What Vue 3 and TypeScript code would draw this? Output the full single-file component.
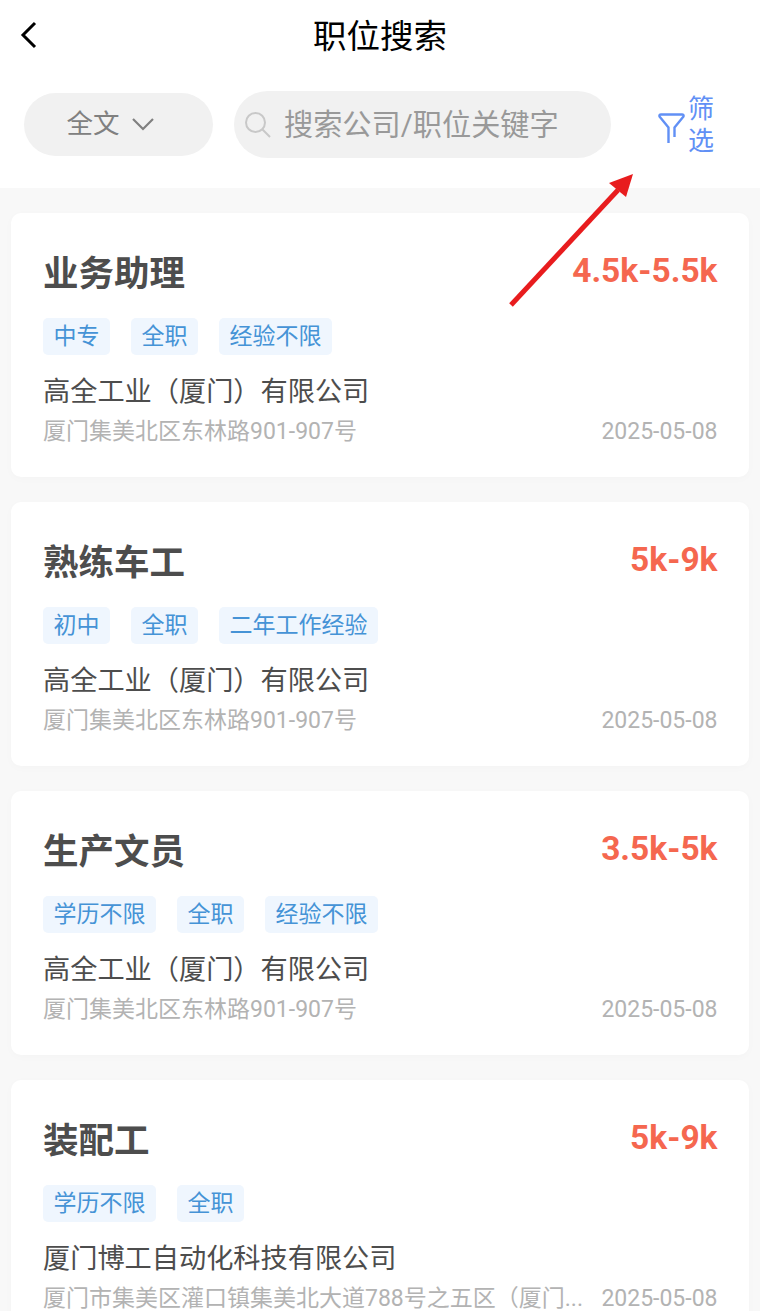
<script setup lang="ts">
interface Job { title: string; salary: string; tags: string[]; company: string; address: string; date: string }
const jobs: Job[] = [
  { title: '业务助理', salary: '4.5k-5.5k', tags: ['中专', '全职', '经验不限'], company: '高全工业（厦门）有限公司', address: '厦门集美北区东林路901-907号', date: '2025-05-08' },
  { title: '熟练车工', salary: '5k-9k', tags: ['初中', '全职', '二年工作经验'], company: '高全工业（厦门）有限公司', address: '厦门集美北区东林路901-907号', date: '2025-05-08' },
  { title: '生产文员', salary: '3.5k-5k', tags: ['学历不限', '全职', '经验不限'], company: '高全工业（厦门）有限公司', address: '厦门集美北区东林路901-907号', date: '2025-05-08' },
  { title: '装配工', salary: '5k-9k', tags: ['学历不限', '全职'], company: '厦门博工自动化科技有限公司', address: '厦门市集美区灌口镇集美北大道788号之五区（厦门...', date: '2025-05-08' },
]
</script>

<template>
  <div class="page">
    <header class="top">
      <div class="nav">
        <svg class="back" width="18" height="28" viewBox="0 0 18 28"><path d="M15 2 L3 14 L15 26" fill="none" stroke="#000" stroke-width="3"/></svg>
        <h1 class="nav-title">职位搜索</h1>
      </div>
      <div class="search-row">
        <div class="scope">
          <span class="scope-text">全文</span>
          <svg class="chevron" width="24" height="14" viewBox="0 0 24 14"><path d="M2 2 L12 12 L22 2" fill="none" stroke="#808080" stroke-width="2.2"/></svg>
        </div>
        <div class="search">
          <svg width="28" height="28" viewBox="0 0 28 28"><circle cx="11.500" cy="11.500" r="9.500" fill="none" stroke="#c8c8c8" stroke-width="2"/><path d="M18.500 18.500 L26 26" fill="none" stroke="#c8c8c8" stroke-width="2"/></svg>
          <span class="search-text">搜索公司/职位关键字</span>
        </div>
        <div class="filter">
          <svg width="29" height="32" viewBox="0 0 29 32"><path d="M11.500 31 V15.500 L2.500 4.500 Q2 2.500 4 2.500 H25 Q27 2.500 26.500 4.500 L17.500 15.500 V25" fill="none" stroke="#6190f5" stroke-width="2.400" stroke-linejoin="round"/></svg>
          <span class="filter-text">筛<br>选</span>
        </div>
      </div>
    </header>
    <main class="list">
      <article v-for="job in jobs" :key="job.title" class="card">
        <div class="head">
          <h2 class="title">{{ job.title }}</h2>
          <span class="salary">{{ job.salary }}</span>
        </div>
        <div class="tags">
          <span v-for="tag in job.tags" :key="tag" class="tag">{{ tag }}</span>
        </div>
        <div class="company">{{ job.company }}</div>
        <div class="foot">
          <span class="address">{{ job.address }}</span>
          <span class="date">{{ job.date }}</span>
        </div>
      </article>
    </main>
    <svg class="arrow" width="130" height="140" viewBox="0 0 130 140"><path d="M4 135 L111 20" fill="none" stroke="#e81c1e" stroke-width="5"/><path d="M126 4 L119 27 L102 13 Z" fill="#e81c1e"/></svg>
  </div>
</template>

<style>
html, body { margin: 0; background: #f8f8f8; }
</style>

<style scoped>
.page {
  position: relative;
  width: 760px;
  height: 1311px;
  overflow: hidden;
  background: #f8f8f8;
  font-family: Roboto, "Noto Sans CJK SC", sans-serif;
}
.top { height: 188px; background: #fff; }
.nav {
  position: relative;
  height: 70px;
  box-sizing: border-box;
  padding-bottom: 4px;
  display: flex;
  align-items: center;
  justify-content: center;
}
.back { position: absolute; left: 20px; top: 21px; }
.nav-title { margin: 0; font-size: 33.500px; font-weight: 400; color: #000; }
.search-row {
  height: 90px;
  padding: 0 0 0 24px;
  display: flex;
  align-items: flex-start;
}
.scope {
  width: 189px;
  height: 63px;
  margin-top: 23px;
  padding-right: 16px;
  box-sizing: border-box;
  border-radius: 32px;
  background: #f1f1f1;
  display: flex;
  align-items: center;
  justify-content: center;
  gap: 11px;
  color: #808080;
  font-size: 26.500px;
}
.scope-text { padding-bottom: 7px; }
.chevron { margin-bottom: 2px; }
.search {
  width: 377px;
  height: 67px;
  margin-top: 21px;
  margin-left: 21px;
  padding-left: 10px;
  box-sizing: border-box;
  border-radius: 34px;
  background: #f1f1f1;
  display: flex;
  align-items: center;
  gap: 12px;
  color: #999;
  font-size: 29.200px;
  white-space: nowrap;
}
.search-text { padding-bottom: 6px; }
.filter {
  margin-left: 46px;
  margin-top: 20px;
  display: flex;
  align-items: center;
  gap: 2px;
  color: #6190f5;
}
.filter svg { margin-top: 9px; }
.filter-text { font-size: 26px; line-height: 32px; padding-top: 3px; }
.list {
  padding: 25px 11px 0;
  display: flex;
  flex-direction: column;
  gap: 25.500px;
}
.card {
  height: 263.500px;
  flex: none;
  box-sizing: border-box;
  padding: 33px 31.500px 0 32px;
  border-radius: 10px;
  background: #fff;
  box-shadow: 0 2px 10px rgba(0, 0, 0, 0.02);
}
.head {
  display: flex;
  justify-content: space-between;
  align-items: flex-start;
  height: 53px;
}
.title { margin: 0; padding-top: 3px; font-size: 35.500px; line-height: 50px; font-weight: 700; color: #4d4d4d; }
.salary { font-size: 33.500px; line-height: 50px; font-weight: 700; color: #f5674f; }
.tags { display: flex; gap: 21px; margin-top: 19px; }
.tag {
  height: 37px;
  padding: 0 10.500px;
  border-radius: 5px;
  background: #eff6fe;
  color: #4593d6;
  font-size: 23px;
  line-height: 37px;
}
.company { margin-top: 17px; font-size: 27.200px; line-height: 40px; color: #4d4d4d; }
.foot {
  display: flex;
  justify-content: space-between;
  align-items: baseline;
  gap: 16px;
  height: 36px;
  font-size: 23px;
  color: #b3b3b3;
}
.address { min-width: 0; white-space: nowrap; }
.date { flex: none; }
.arrow { position: absolute; left: 507px; top: 170px; }
</style>
